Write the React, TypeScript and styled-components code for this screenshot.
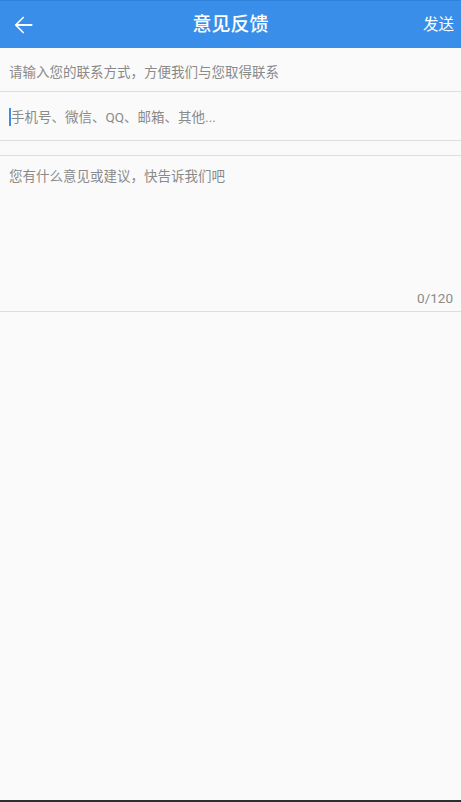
import { useState } from "react";
import styled, { createGlobalStyle } from "styled-components";

const MAX_LENGTH = 120;

const GlobalStyle = createGlobalStyle`
  html, body {
    margin: 0;
    padding: 0;
    background: #fafafa;
  }
  body {
    font-family: Roboto, "Noto Sans CJK SC", sans-serif;
  }
`;

const Page = styled.div`
  display: flex;
  flex-direction: column;
  height: 802px;
  background: #fafafa;
  border-bottom: 2px solid #2b2e33;
  box-sizing: border-box;
`;

const TopBar = styled.header`
  display: grid;
  grid-template-columns: 1fr auto 1fr;
  align-items: center;
  height: 48px;
  background: #388ee9;
  border-top: 1px solid #2f82dc;
  box-sizing: border-box;
  color: #fff;
`;

const BackButton = styled.button`
  justify-self: start;
  display: flex;
  align-items: center;
  padding: 0 0 0 9px;
  margin: 0;
  border: none;
  background: none;
  color: #fff;
  cursor: pointer;
`;

const Title = styled.h1`
  margin: 0;
  font-family: Roboto, "Noto Sans CJK SC", sans-serif;
  font-size: 19px;
  font-weight: 500;
  line-height: 24px;
`;

const SendButton = styled.button`
  justify-self: end;
  padding: 0 7px 0 0;
  margin: 0;
  border: none;
  background: none;
  color: #fff;
  font-family: Roboto, "Noto Sans CJK SC", sans-serif;
  font-size: 15.5px;
  line-height: 24px;
  cursor: pointer;
`;

const SectionLabel = styled.div`
  height: 44px;
  padding: 14px 9px 0;
  box-sizing: border-box;
  border-bottom: 1px solid #dddddd;
  color: #8a8a8a;
  font-family: Roboto, "Noto Sans CJK SC", sans-serif;
  font-size: 13.5px;
  line-height: 20px;
`;

const ContactRow = styled.div`
  display: flex;
  align-items: center;
  height: 49px;
  padding: 1px 9px 0;
  box-sizing: border-box;
  border-bottom: 1px solid #dddddd;
`;

const Caret = styled.span`
  flex: none;
  width: 2px;
  height: 18px;
  background: #3a8ee8;
`;

const ContactInput = styled.input`
  flex: 1;
  min-width: 0;
  padding: 0;
  margin: 0;
  border: none;
  outline: none;
  background: transparent;
  color: #333;
  font-family: Roboto, "Noto Sans CJK SC", sans-serif;
  font-size: 13.5px;
  line-height: 20px;
  caret-color: transparent;

  &::placeholder {
    color: #8a8a8a;
  }
`;

const Spacer = styled.div`
  height: 15px;
  box-sizing: border-box;
  border-bottom: 1px solid #dddddd;
`;

const FeedbackBox = styled.div`
  display: flex;
  flex-direction: column;
  height: 156px;
  box-sizing: border-box;
  border-bottom: 1px solid #dddddd;
`;

const FeedbackText = styled.textarea`
  flex: 1;
  padding: 10px 9px 0;
  margin: 0;
  border: none;
  outline: none;
  resize: none;
  background: transparent;
  color: #333;
  font-family: Roboto, "Noto Sans CJK SC", sans-serif;
  font-size: 13.5px;
  line-height: 20px;

  &::placeholder {
    color: #8a8a8a;
  }
`;

const Counter = styled.div`
  align-self: flex-end;
  padding: 0 8px 5px 0;
  color: #8a8a8a;
  font-family: Roboto, sans-serif;
  font-size: 13.5px;
  line-height: 16px;
`;

function BackArrow() {
  return (
    <svg width="28" height="28" viewBox="0 0 24 24" fill="currentColor">
      <path d="M20 11.1H7.6l5.5-5.5-.95-.95L4.8 12l7.35 7.35.95-.95-5.5-5.5H20z" />
    </svg>
  );
}

export default function App() {
  const [contact, setContact] = useState("");
  const [feedback, setFeedback] = useState("");

  return (
    <>
      <GlobalStyle />
      <Page>
        <TopBar>
          <BackButton aria-label="返回">
            <BackArrow />
          </BackButton>
          <Title>意见反馈</Title>
          <SendButton>发送</SendButton>
        </TopBar>

        <SectionLabel>请输入您的联系方式，方便我们与您取得联系</SectionLabel>
        <ContactRow>
          <Caret />
          <ContactInput
            value={contact}
            onChange={(e) => setContact(e.target.value)}
            placeholder="手机号、微信、QQ、邮箱、其他..."
          />
        </ContactRow>

        <Spacer />

        <FeedbackBox>
          <FeedbackText
            value={feedback}
            maxLength={MAX_LENGTH}
            onChange={(e) => setFeedback(e.target.value)}
            placeholder="您有什么意见或建议，快告诉我们吧"
          />
          <Counter>
            {feedback.length}/{MAX_LENGTH}
          </Counter>
        </FeedbackBox>
      </Page>
    </>
  );
}
